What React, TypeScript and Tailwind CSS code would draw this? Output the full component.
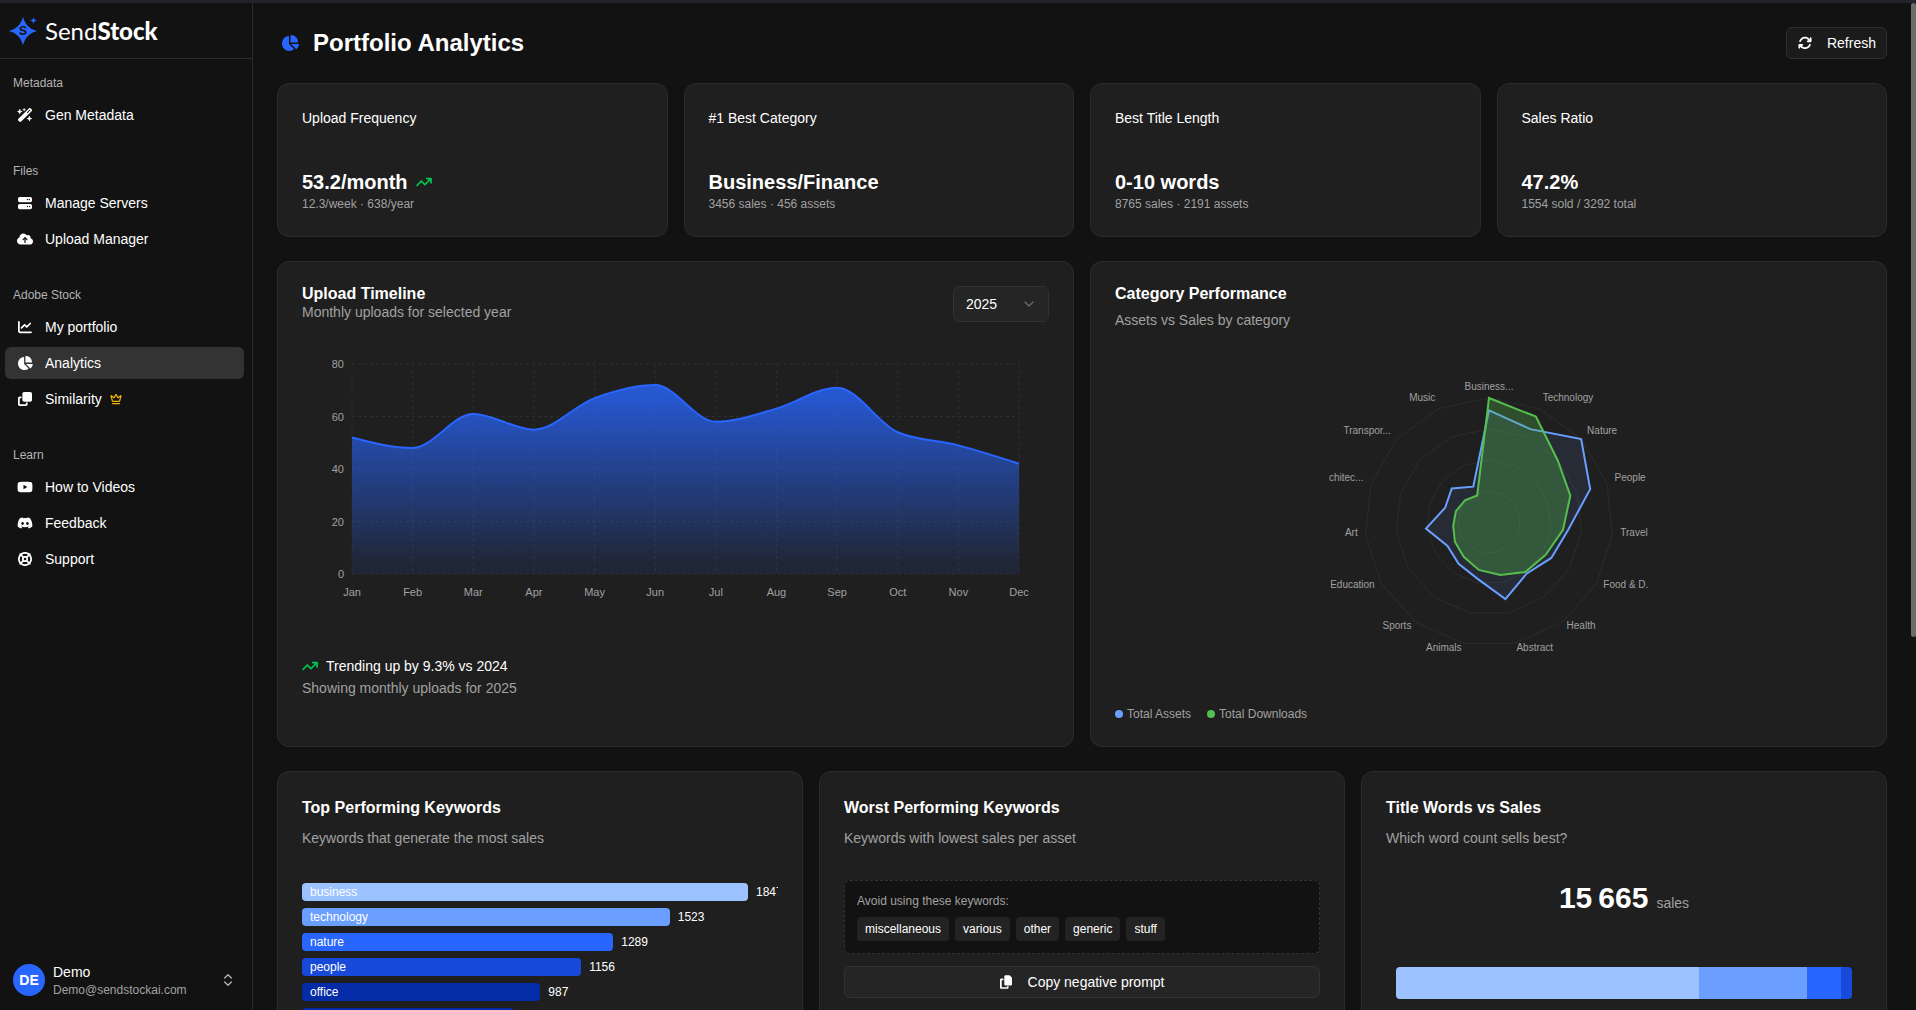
import React from 'react';
import { ChevronDown, ChevronsUpDown, Crown } from 'lucide-react';
import {
  FaArrowTrendUp,
  FaArrowsRotate,
  FaChartLine,
  FaChartPie,
  FaClone,
  FaCloudArrowUp,
  FaCopy,
  FaDiscord,
  FaLifeRing,
  FaServer,
  FaWandMagicSparkles,
  FaYoutube,
} from 'react-icons/fa6';

type IconType = React.ComponentType<{ className?: string }>;

interface NavItem {
  label: string;
  icon: IconType;
  active?: boolean;
  premium?: boolean;
}

const NAV: { title: string; items: NavItem[] }[] = [
  { title: 'Metadata', items: [{ label: 'Gen Metadata', icon: FaWandMagicSparkles }] },
  {
    title: 'Files',
    items: [
      { label: 'Manage Servers', icon: FaServer },
      { label: 'Upload Manager', icon: FaCloudArrowUp },
    ],
  },
  {
    title: 'Adobe Stock',
    items: [
      { label: 'My portfolio', icon: FaChartLine },
      { label: 'Analytics', icon: FaChartPie, active: true },
      { label: 'Similarity', icon: FaClone, premium: true },
    ],
  },
  {
    title: 'Learn',
    items: [
      { label: 'How to Videos', icon: FaYoutube },
      { label: 'Feedback', icon: FaDiscord },
      { label: 'Support', icon: FaLifeRing },
    ],
  },
];

const STATS = [
  { title: 'Upload Frequency', value: '53.2/month', detail: '12.3/week · 638/year', trend: true },
  { title: '#1 Best Category', value: 'Business/Finance', detail: '3456 sales · 456 assets' },
  { title: 'Best Title Length', value: '0-10 words', detail: '8765 sales · 2191 assets' },
  { title: 'Sales Ratio', value: '47.2%', detail: '1554 sold / 3292 total' },
];

const UPLOADS = [
  { month: 'Jan', value: 52 },
  { month: 'Feb', value: 48 },
  { month: 'Mar', value: 61 },
  { month: 'Apr', value: 55 },
  { month: 'May', value: 67 },
  { month: 'Jun', value: 72 },
  { month: 'Jul', value: 58 },
  { month: 'Aug', value: 63 },
  { month: 'Sep', value: 71 },
  { month: 'Oct', value: 54 },
  { month: 'Nov', value: 49 },
  { month: 'Dec', value: 42 },
];

// share of the outer ring, per category
const CATEGORIES = [
  { name: 'Business...', assets: 0.9, sales: 1 },
  { name: 'Technology', assets: 0.82, sales: 0.93 },
  { name: 'Nature', assets: 1, sales: 0.745 },
  { name: 'People', assets: 0.858, sales: 0.69 },
  { name: 'Travel', assets: 0.64, sales: 0.6 },
  { name: 'Food & D...', assets: 0.58, sales: 0.528 },
  { name: 'Health', assets: 0.515, sales: 0.498 },
  { name: 'Abstract', assets: 0.636, sales: 0.436 },
  { name: 'Animals', assets: 0.465, sales: 0.395 },
  { name: 'Sports', assets: 0.417, sales: 0.347 },
  { name: 'Education', assets: 0.386, sales: 0.318 },
  { name: 'Art', assets: 0.511, sales: 0.29 },
  { name: 'Architec...', assets: 0.372, sales: 0.281 },
  { name: 'Transpor...', assets: 0.404, sales: 0.261 },
  { name: 'Music', assets: 0.312, sales: 0.234 },
];

const KEYWORDS = [
  { word: 'business', sales: 1847, color: 'bg-[#9cc2ff]' },
  { word: 'technology', sales: 1523, color: 'bg-[#6a9fff]' },
  { word: 'nature', sales: 1289, color: 'bg-[#2866ff]' },
  { word: 'people', sales: 1156, color: 'bg-[#174ad8]' },
  { word: 'office', sales: 987, color: 'bg-[#042ba8]' },
  { word: 'design', sales: 876, color: 'bg-[#042ba8]' },
];

const WORST = ['miscellaneous', 'various', 'other', 'generic', 'stuff'];

const TITLE_SEGMENTS = [
  { share: 303, color: 'bg-[#9cc2ff]' },
  { share: 108, color: 'bg-[#6a9fff]' },
  { share: 34, color: 'bg-[#2866ff]' },
  { share: 11, color: 'bg-[#174ad8]' },
];

type Point = [number, number];

// monotone cubic through the points, so the curve never overshoots the data
const monotonePath = (pts: Point[]) => {
  const n = pts.length;
  const slope = (i: number) => (pts[i + 1][1] - pts[i][1]) / (pts[i + 1][0] - pts[i][0]);
  const t: number[] = [];
  for (let i = 1; i < n - 1; i++) {
    const a = slope(i - 1);
    const b = slope(i);
    t[i] = (Math.sign(a) + Math.sign(b)) * Math.min(Math.abs(a), Math.abs(b), 0.5 * Math.abs((a + b) / 2)) || 0;
  }
  t[0] = (3 * slope(0) - t[1]) / 2;
  t[n - 1] = (3 * slope(n - 2) - t[n - 2]) / 2;
  let d = `M${pts[0][0]},${pts[0][1]}`;
  for (let i = 0; i < n - 1; i++) {
    const dx = (pts[i + 1][0] - pts[i][0]) / 3;
    d += `C${pts[i][0] + dx},${pts[i][1] + dx * t[i]},${pts[i + 1][0] - dx},${pts[i + 1][1] - dx * t[i + 1]},${pts[i + 1][0]},${pts[i + 1][1]}`;
  }
  return d;
};

const Card: React.FC<{ children: React.ReactNode }> = ({ children }) => (
  <section className="rounded-xl border border-[#2c2c2c] bg-[#1f1f1f] p-6">{children}</section>
);

const Logo: React.FC = () => (
  <a href="#" className="flex items-center gap-2">
    <svg viewBox="0 0 28 28" className="size-7">
      <path d="M14 0 C16.500 8 20 11.500 28 14 C20 16.500 16.500 20 14 28 C11.500 20 8 16.500 0 14 C8 11.500 11.500 8 14 0Z" fill="#2866ff" />
      <path d="M24.500 0 C25 2.300 25.700 3 28 3.500 C25.700 4 25 4.700 24.500 7 C24 4.700 23.300 4 21 3.500 C23.300 3 24 2.300 24.500 0Z" fill="#2866ff" />
      <text x="14" y="18" textAnchor="middle" className="font-['Liberation_Sans',sans-serif] text-[12px] font-bold" fill="#111">S</text>
    </svg>
    <span className="font-['Lato','Liberation_Sans',sans-serif] text-2xl text-white">
      Send<b className="font-black">Stock</b>
    </span>
  </a>
);

const Sidebar: React.FC = () => (
  <aside className="flex w-[253px] shrink-0 flex-col border-r border-[#2c2c2c]">
    <div className="flex h-14 items-center border-b border-[#2c2c2c] px-[9px]">
      <Logo />
    </div>
    <nav className="flex flex-1 flex-col gap-6 py-2 pl-[5px] pr-2">
      {NAV.map((group) => (
        <div key={group.title}>
          <h2 className="flex h-8 items-center px-2 text-xs text-[#b4b4b4]">{group.title}</h2>
          <ul className="flex flex-col gap-1">
            {group.items.map(({ label, icon: Icon, active, premium }) => (
              <li key={label}>
                <a
                  href="#"
                  className={`flex h-8 items-center gap-3 rounded-md px-3 text-sm text-white ${active ? 'bg-[#333333]' : ''}`}
                >
                  <Icon className="h-3.5 w-4" />
                  <span className="flex items-center gap-2">
                    {label}
                    {premium && <Crown className="size-3 text-[#f0b100]" strokeWidth={2.5} />}
                  </span>
                </a>
              </li>
            ))}
          </ul>
        </div>
      ))}
    </nav>
    <button className="flex items-center gap-2 py-3 pr-4 pl-[13px] text-left">
      <span className="flex size-8 items-center justify-center rounded-full bg-[#2866ff] text-sm font-bold text-white">DE</span>
      <span className="flex flex-1 flex-col">
        <span className="text-sm text-white">Demo</span>
        <span className="text-xs text-[#a1a1a1]">Demo@sendstockai.com</span>
      </span>
      <ChevronsUpDown className="size-4 text-[#b4b4b4]" />
    </button>
  </aside>
);

const UploadChart: React.FC = () => {
  const left = 50;
  const right = 717;
  const top = 10;
  const bottom = 220;
  const step = (right - left) / (UPLOADS.length - 1);
  const toY = (v: number) => bottom - (v / 80) * (bottom - top);
  const line = monotonePath(UPLOADS.map((u, i): Point => [left + i * step, toY(u.value)]));

  return (
    <svg viewBox="0 0 747 250" className="block w-full" role="img" aria-label="Monthly uploads">
      <defs>
        <linearGradient id="uploads" x1="0" y1="0" x2="0" y2="1">
          <stop offset="5%" stopColor="#2866ff" stopOpacity={0.8} />
          <stop offset="95%" stopColor="#2866ff" stopOpacity={0.1} />
        </linearGradient>
      </defs>
      <g stroke="#2f2f2f" strokeDasharray="3 3">
        {[0, 20, 40, 60, 80].map((v) => (
          <line key={v} x1={left} x2={right} y1={toY(v)} y2={toY(v)} />
        ))}
        {UPLOADS.map((u, i) => (
          <line key={u.month} x1={left + i * step} x2={left + i * step} y1={top} y2={bottom} />
        ))}
      </g>
      <path d={`${line}L${right},${bottom}L${left},${bottom}Z`} fill="url(#uploads)" />
      <path d={line} fill="none" stroke="#2866ff" strokeWidth={2} />
      <g className="text-[11px]" fill="#a1a1a1">
        {[0, 20, 40, 60, 80].map((v) => (
          <text key={v} x={left - 8} y={toY(v) + 4} textAnchor="end">{v}</text>
        ))}
        {UPLOADS.map((u, i) => (
          <text key={u.month} x={left + i * step} y={bottom + 22} textAnchor="middle">{u.month}</text>
        ))}
      </g>
    </svg>
  );
};

const RadarChart: React.FC = () => {
  const radius = 124;
  const at = (i: number, r: number): Point => {
    const angle = (i * 2 * Math.PI) / CATEGORIES.length;
    return [160 + r * Math.sin(angle), 160 - r * Math.cos(angle)];
  };
  const ring = (scale: (i: number) => number) =>
    CATEGORIES.map((_, i) => at(i, radius * scale(i)).join(',')).join(' ');

  return (
    <svg viewBox="0 0 320 320" className="mx-auto block size-80 overflow-hidden" role="img" aria-label="Assets vs sales by category">
      {[0.25, 0.5, 0.75, 1].map((s) => (
        <polygon key={s} points={ring(() => s)} fill="none" stroke="#2c2c2c" />
      ))}
      <polygon points={ring((i) => CATEGORIES[i].assets)} fill="#6a9fff" fillOpacity={0.1} stroke="#6a9fff" strokeWidth={2} />
      <polygon points={ring((i) => CATEGORIES[i].sales)} fill="#55bf4d" fillOpacity={0.3} stroke="#55bf4d" strokeWidth={2} />
      <g className="text-[10px]" fill="#a1a1a1">
        {CATEGORIES.map((c, i) => {
          const [x, y] = at(i, 132);
          const anchor = i === 0 ? 'middle' : i < 8 ? 'start' : 'end';
          return (
            <text key={c.name} x={x} y={y} textAnchor={anchor}>{c.name}</text>
          );
        })}
      </g>
    </svg>
  );
};

const CardHeading: React.FC<{ title: string; subtitle: string }> = ({ title, subtitle }) => (
  <header className="mb-8 flex flex-col gap-2">
    <h2 className="text-base font-bold text-white">{title}</h2>
    <p className="text-sm text-[#a1a1a1]">{subtitle}</p>
  </header>
);

const App: React.FC = () => {
  const best = KEYWORDS[0].sales;

  return (
    <div className="flex h-screen flex-col overflow-hidden bg-[#121212] font-['Liberation_Sans',Arial,sans-serif] text-white">
      <div className="h-[3px] shrink-0 bg-[#232129]"></div>
      <div className="flex min-h-0 flex-1">
        <Sidebar />
        <main className="flex min-w-0 flex-1 flex-col gap-6 overflow-hidden p-6">
          <div className="flex shrink-0 items-center justify-between">
            <h1 className="flex items-center gap-3.5 pl-1 text-2xl font-bold">
              <FaChartPie className="h-4 w-[18px] text-[#2866ff]" />
              Portfolio Analytics
            </h1>
            <button className="flex h-8 items-center gap-3.5 rounded-md border border-[#2f2f2f] bg-[#1b1b1b] px-2.5 text-sm">
              <FaArrowsRotate className="h-3.5 w-4" />
              Refresh
            </button>
          </div>

          <div className="grid shrink-0 grid-cols-4 gap-4">
            {STATS.map((s) => (
              <Card key={s.title}>
                <h2 className="mb-10 text-sm">{s.title}</h2>
                <p className="flex items-center gap-2 text-xl font-bold">
                  {s.value}
                  {s.trend && <FaArrowTrendUp className="h-3.5 w-4 text-[#00c950]" />}
                </p>
                <p className="text-xs text-[#a1a1a1]">{s.detail}</p>
              </Card>
            ))}
          </div>

          <div className="grid shrink-0 grid-cols-2 gap-4">
            <Card>
              <div className="mb-8 flex items-start justify-between">
                <div>
                  <h2 className="text-base leading-4 font-bold">Upload Timeline</h2>
                  <p className="text-sm text-[#a1a1a1]">Monthly uploads for selected year</p>
                </div>
                <div className="relative">
                  <select
                    aria-label="Year"
                    defaultValue="2025"
                    className="h-9 w-24 appearance-none rounded-md border border-[#333333] bg-[#252525] px-3 text-sm text-white"
                  >
                    <option>2025</option>
                    <option>2024</option>
                  </select>
                  <ChevronDown className="pointer-events-none absolute top-2.5 right-3 size-4 text-[#6b6b6b]" />
                </div>
              </div>
              <UploadChart />
              <div className="mt-13 flex flex-col gap-0.5 text-sm">
                <p className="flex items-center gap-2">
                  <FaArrowTrendUp className="h-3.5 w-4 text-[#00c950]" />
                  Trending up by 9.3% vs 2024
                </p>
                <p className="text-[#a1a1a1]">Showing monthly uploads for 2025</p>
              </div>
            </Card>

            <Card>
              <h2 className="text-base leading-4 font-bold">Category Performance</h2>
              <p className="mt-2 mb-8 text-sm text-[#a1a1a1]">Assets vs Sales by category</p>
              <RadarChart />
              <ul className="mt-6 flex gap-4 text-xs text-[#a1a1a1]">
                <li className="flex items-center gap-1">
                  <span className="size-2 rounded-full bg-[#6a9fff]"></span>
                  Total Assets
                </li>
                <li className="flex items-center gap-1">
                  <span className="size-2 rounded-full bg-[#55bf4d]"></span>
                  Total Downloads
                </li>
              </ul>
            </Card>
          </div>

          <div className="grid shrink-0 grid-cols-3 gap-4">
            <Card>
              <CardHeading title="Top Performing Keywords" subtitle="Keywords that generate the most sales" />
              <ul className="flex flex-col gap-[7px] overflow-hidden pt-[3px] text-xs">
                {KEYWORDS.map((k) => (
                  <li key={k.word} className="flex h-[18px] items-center gap-2">
                    <div
                      className={`flex h-full shrink-0 items-center rounded-sm px-2 text-white ${k.color}`}
                      style={{ width: `${(k.sales / best) * 93.7}%` }}
                    >
                      {k.word}
                    </div>
                    <span>{k.sales}</span>
                  </li>
                ))}
              </ul>
            </Card>

            <Card>
              <CardHeading title="Worst Performing Keywords" subtitle="Keywords with lowest sales per asset" />
              <div className="rounded-md border border-dashed border-[#333333] bg-[#121212] p-3 text-xs">
                <p className="mb-2 text-[#a1a1a1]">Avoid using these keywords:</p>
                <ul className="flex flex-wrap gap-1.5">
                  {WORST.map((w) => (
                    <li key={w} className="flex h-6 items-center rounded-sm bg-[#232323] px-2">{w}</li>
                  ))}
                </ul>
              </div>
              <button className="mt-3 flex h-8 w-full items-center justify-center gap-4 rounded-md border border-[#333333] bg-[#252525] text-sm">
                <FaCopy className="h-3.5 w-3" />
                Copy negative prompt
              </button>
            </Card>

            <Card>
              <CardHeading title="Title Words vs Sales" subtitle="Which word count sells best?" />
              <p className="flex items-baseline justify-center gap-2">
                <span className="text-3xl font-bold">{'15\u202f665'}</span>
                <span className="text-sm text-[#a1a1a1]">sales</span>
              </p>
              <div className="mx-[10px] mt-[51px] flex h-8 overflow-hidden rounded-sm">
                {TITLE_SEGMENTS.map((s) => (
                  <div key={s.color} className={s.color} style={{ flexGrow: s.share }}></div>
                ))}
              </div>
            </Card>
          </div>
        </main>
        <div className="w-[5px] shrink-0">
          <div className="h-[63%] rounded-full bg-[#6b6b6b]"></div>
        </div>
      </div>
    </div>
  );
};

export default App;
